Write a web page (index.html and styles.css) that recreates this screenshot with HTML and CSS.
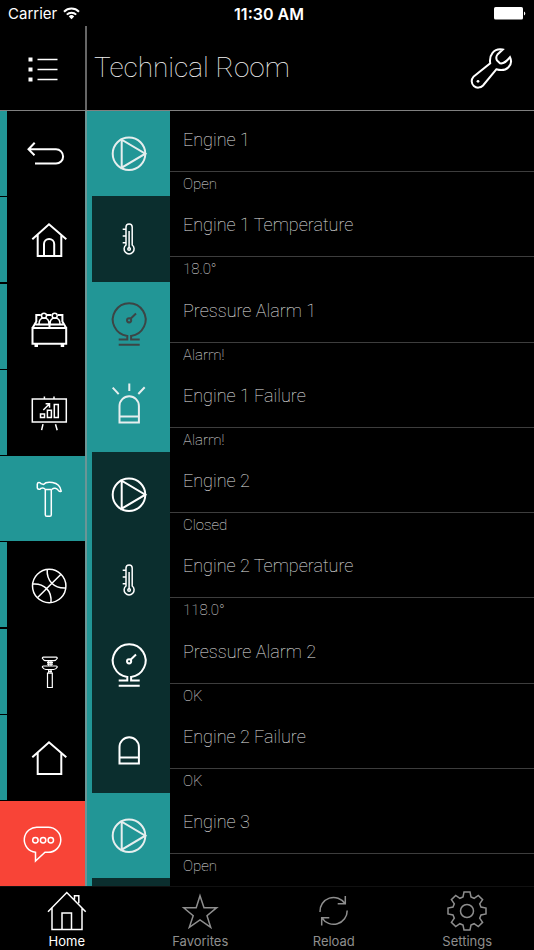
FILE: index.html
```html
<!DOCTYPE html>
<html lang="en">
<head>
<meta charset="utf-8">
<meta name="viewport" content="width=device-width, initial-scale=1">
<title>Technical Room</title>
<link rel="stylesheet" href="styles.css">
</head>
<body>
<svg class="sprite" aria-hidden="true">
  <symbol id="house" viewBox="0 0 48 49"><path d="M7.3 24.3 24 9.3l17.3 15M12.7 20v21h23.6V20"/></symbol>
  <symbol id="pump" viewBox="0 0 48 49"><circle cx="24" cy="24.7" r="16.3"/><path d="M16.7 10.7v28L40.3 24.7z"/></symbol>
  <symbol id="thermo" viewBox="0 0 48 49"><g stroke-width="1.5"><path d="M21 31V13a3.1 3.1 0 0 1 6.2 0v18a5 5 0 1 1-6.2 0zM24.1 17v17M17.7 15.3H21M17.7 22H21M17.7 28.7H21"/><circle cx="24.1" cy="35" r="1.3"/></g></symbol>
  <symbol id="gauge" viewBox="0 0 48 49"><path d="M13.7 39.5h8.6v-3.6a16.4 16.4 0 1 1 3.8 0v3.6h8.6M13.7 44.8h21M25.6 18.7l5.4-5.2"/><circle cx="24.1" cy="20.3" r="2.1"/></symbol>
  <symbol id="lamp" viewBox="0 0 48 49"><path d="M14.5 37.6V21a9.7 9.7 0 0 1 19.4 0v16.6zM14.5 31.4h19.4"/></symbol>
</svg>
<div class="app">
  <div class="status">
    <span class="carrier">Carrier
      <svg width="17" height="13" viewBox="0 0 17 13" aria-hidden="true"><g fill="none" stroke="#fff" stroke-width="2"><path d="M1 4.7a10.6 10.6 0 0 1 15 0M3.8 7.6a6.6 6.6 0 0 1 9.4 0"/></g><path d="M5.8 9.4a3.8 3.8 0 0 1 5.4 0L8.5 12.2z" fill="#fff"/></svg>
    </span>
    <time class="clock">11:30 AM</time>
    <span class="power"><svg width="32" height="13" viewBox="0 0 32 13" aria-hidden="true"><rect width="29" height="12.6" rx="1.6" fill="#fff"/><path d="M30 4.4a2.2 2.2 0 0 1 0 4z" fill="#fff"/></svg></span>
  </div>

  <header class="header">
    <button class="menu" type="button" aria-label="Menu">
      <svg class="icon" viewBox="0 0 48 49"><path d="M18.5 15.5h20M18.5 25.5h20M18.5 35.5h20" stroke-width="1.5"/><path d="M9.5 13.5h4v4h-4zM9.5 23.5h4v4h-4zM9.5 33.5h4v4h-4z" fill="#fff" stroke="none"/></svg>
    </button>
    <h1 class="title">Technical Room</h1>
    <button class="tools" type="button" aria-label="Tools">
      <svg class="icon" viewBox="0 0 48 49"><path d="M6.4 32.8 23.2 19.3C22 11.5 26.5 4 35.7 5.6L30.5 10.5C29 12.5 29.2 15 30 16.5L33 19.3C37 20 39.5 17.5 43 13.2C46.5 20.5 40 28.5 29.3 25.3L16 41.5A6.3 6.3 0 0 1 6.4 32.8z"/><circle cx="11" cy="37.3" r="1.4" fill="#fff" stroke="none"/></svg>
    </button>
  </header>

  <main class="main">
    <nav class="rooms" aria-label="Rooms">
      <a class="room" href="#back" aria-label="Back"><svg class="icon" viewBox="0 0 48 49"><path d="M9.7 13.7 3.500 20.3l6 6M3.500 20.3h27.500a7.1 7.1 0 0 1 0 14.2H10"/></svg></a>
      <a class="room" href="#entrance" aria-label="Entrance"><svg class="icon" viewBox="0 0 48 49"><path d="M7.3 24.3 24 9.3l17.3 15M12.7 20v21h23.6V20M19 41V29a5.1 5.1 0 0 1 10.2 0v12"/></svg></a>
      <a class="room" href="#bedroom" aria-label="Bedroom"><svg class="icon" viewBox="0 0 48 49"><path d="M7.5 26h33.7v15.7H7.5zM7.5 26l3.8-6.500V13h4.500M41.2 26l-3.8-6.500V13h-4.500M21.5 13h5M24.500 19.500V26M10.500 22.500h27.700"/><path stroke-width="1.5" d="M14 22c0-4 2-6 5-6s5 2 5 6M25 22c0-4 2-6 5-6s5 2 5 6"/><circle cx="19" cy="13.7" r="2.5" stroke-width="1.5"/><circle cx="29.7" cy="13.7" r="2.5" stroke-width="1.5"/><path d="M9.5 43.5h3.500M35.700 43.500h3.500" stroke-width="3"/></svg></a>
      <a class="room" href="#office" aria-label="Office"><svg class="icon" viewBox="0 0 48 49"><g stroke-width="1.5"><path d="M7.3 10.9h34v23h-34zM19.4 8.4v2.500M29 8.400v2.500M18 36.200l-1.400 6M30.500 36.200l1.700 6M15.500 26h4v3.600h-4zM22.400 22.300h4v7.300h-4zM29.300 16.600h4v13h-4zM18.300 22l6-6M20.600 15.700h3.900v4"/></g></svg></a>
      <a class="room selected" href="#technical" aria-label="Technical Room" aria-current="page"><svg class="icon" viewBox="0 0 48 49"><path stroke-width="1.5" d="M20.3 15.4v25.3q0 1.600 1.600 1.600h2.800q1.600 0 1.600-1.600V15.400M20.300 15.400c-1.200-1.500-2.900-1.700-4.400-1-.6 1.400-3.400 1.300-3.600-.6V10c.3-1.800 2.800-2 3.700-.3l2.500.7c2-2.300 6-2.300 9-1.800 5 .8 8 4.200 8.700 8.500-1 .8-2 .2-2.800-.7-2-2.500-4.700-2.800-6-1.300-2 .7-5 .3-7.100.3z"/></svg></a>
      <a class="room" href="#gym" aria-label="Gym"><svg class="icon" viewBox="0 0 48 49"><g stroke-width="1.5"><circle cx="24.2" cy="26" r="16.7"/><path d="M36 14.200 12.400 37.800M22.200 9.400C21.500 21 29 28.500 40.700 28M7.600 24C19 23 27 30.500 26 42.600"/></g></svg></a>
      <a class="room" href="#workshop" aria-label="Workshop"><svg class="icon" viewBox="0 0 48 49"><g stroke-width="1.2"><path d="M18.3 10.200h13q1 0 1 1-1.500 2.500-3.500 2.500h-8q-2 0-3.500-2.500 0-1 1-1zM18.300 19h13q1 0 1 1-1.500 2.500-3.500 2.500h-8q-2 0-3.500-2.500 0-1 1-1zM22.500 26.200h4.800v14.300h-4.800zM23.700 13.700V19M26 13.700V19M23.700 22.500v3.700M26 22.500v3.700M22 15.300h6M22 17.200h6M23 24.300h4"/></g></svg></a>
      <a class="room" href="#house" aria-label="House"><svg class="icon"><use href="#house"/></svg></a>
      <a class="room alert" href="#messages" aria-label="Messages"><svg class="icon" viewBox="0 0 48 49"><g stroke-width="1.5"><path d="M16.5 33.300v8.700l9.500-8.700h3.300a12.500 12.500 0 0 0 0-25H19.200a12.500 12.500 0 0 0-2.700 25z"/><circle cx="16.400" cy="21.300" r="2.700"/><circle cx="24.100" cy="21.300" r="2.700"/><circle cx="31.800" cy="21.300" r="2.700"/></g></svg></a>
    </nav>

    <ul class="devices">
      <li class="device on"><span class="tile"><svg class="icon"><use href="#pump"/></svg></span><div class="info"><h2 class="name">Engine 1</h2><p class="value">Open</p></div></li>
      <li class="device"><span class="tile"><svg class="icon"><use href="#thermo"/></svg></span><div class="info"><h2 class="name">Engine 1 Temperature</h2><p class="value">18.0°</p></div></li>
      <li class="device on muted"><span class="tile"><svg class="icon"><use href="#gauge"/></svg></span><div class="info"><h2 class="name">Pressure Alarm 1</h2><p class="value">Alarm!</p></div></li>
      <li class="device on"><span class="tile"><svg class="icon" viewBox="0 0 48 49"><path d="M14.5 37.600V21a9.700 9.700 0 0 1 19.400 0v16.600zM14.500 31.400h19.400M24.300-1.400V6M7.700 2.600l6 6.500M39.700 2.300l-6.400 6.700"/></svg></span><div class="info"><h2 class="name">Engine 1 Failure</h2><p class="value">Alarm!</p></div></li>
      <li class="device"><span class="tile"><svg class="icon"><use href="#pump"/></svg></span><div class="info"><h2 class="name">Engine 2</h2><p class="value">Closed</p></div></li>
      <li class="device"><span class="tile"><svg class="icon"><use href="#thermo"/></svg></span><div class="info"><h2 class="name">Engine 2 Temperature</h2><p class="value">118.0°</p></div></li>
      <li class="device"><span class="tile"><svg class="icon"><use href="#gauge"/></svg></span><div class="info"><h2 class="name">Pressure Alarm 2</h2><p class="value">OK</p></div></li>
      <li class="device"><span class="tile"><svg class="icon"><use href="#lamp"/></svg></span><div class="info"><h2 class="name">Engine 2 Failure</h2><p class="value">OK</p></div></li>
      <li class="device on"><span class="tile"><svg class="icon"><use href="#pump"/></svg></span><div class="info"><h2 class="name">Engine 3</h2><p class="value">Open</p></div></li>
      <li class="device"><span class="tile"></span></li>
    </ul>
  </main>

  <nav class="tabs" aria-label="Main">
    <a class="tab active" href="#home" aria-current="page"><svg class="tab-icon" viewBox="0 0 44 44"><path d="M3 22.700 21.800 3.500l18.900 19.200M7 19v21.600h30V19M17 40.600V24h9.500v16.600M29.500 10.500V6.700h4.300v7.500"/></svg>Home</a>
    <a class="tab" href="#favorites"><svg class="tab-icon" viewBox="0 0 44 44"><path d="M22 6.700l4 12h12.700l-9.700 8 3.700 11.600L22 31l-10.700 7.300L15.200 26.700l-9.500-8h12.500z"/></svg>Favorites</a>
    <a class="tab" href="#reload"><svg class="tab-icon" viewBox="0 0 44 44"><path d="M8 23a13.600 13.600 0 0 1 25-8.300M33.300 7v7.700h-7.600M35.200 21.500a13.600 13.600 0 0 1-25.200 7.300M9.700 36.500v-7.700h7.600"/></svg>Reload</a>
    <a class="tab" href="#settings"><svg class="tab-icon" viewBox="0 0 44 44"><path d="M18 8l1-5h6l1 5 3.100 1.300 4.200-2.900 4.300 4.300-2.900 4.200L36 18l5 1v6l-5 1-1.300 3.100 2.900 4.200-4.300 4.300-4.200-2.900L26 36l-1 5h-6l-1-5-3.100-1.300-4.200 2.900-4.300-4.300 2.900-4.200L8 26l-5-1v-6l5-1 1.300-3.100-2.900-4.200 4.300-4.300 4.200 2.900z"/><circle cx="22" cy="22" r="6.500"/></svg>Settings</a>
  </nav>
</div>
</body>
</html>
```
FILE: styles.css
```css
:root {
  --teal: #229696;
  --deep: #0b2e2e;
  --red: #f84437;
  --rule: #808080;
}

* { box-sizing: border-box; }

body {
  margin: 0;
  background: #000;
  color: #fff;
  font-family: Roboto, sans-serif;
}

h1, h2, p, ul { margin: 0; padding: 0; }

.sprite { display: none; }

.app {
  display: flex;
  flex-direction: column;
  height: 100vh;
}

.status {
  display: grid;
  grid-template-columns: 1fr auto 1fr;
  align-items: center;
  height: 26px;
  padding: 1px 8px 0;
  font: 15px/24px Inter, sans-serif;
}
.carrier { display: flex; align-items: center; gap: 6px; }
.clock { padding-left: 4px; font-size: 16px; font-weight: 600; }
.power { display: flex; justify-content: flex-end; }

.header {
  display: flex;
  align-items: stretch;
  height: 85px;
  border-bottom: 1px solid var(--rule);
}
.header button {
  display: flex;
  align-items: center;
  justify-content: center;
  padding: 0;
  border: 0;
  background: none;
}
.header .menu { width: 87px; border-right: 2px solid #666; }
.header .tools { padding-right: 19px; }
.title {
  flex: 1;
  padding-left: 7px;
  font-size: 28px;
  font-weight: 100;
  line-height: 84px;
  opacity: 0.95;
}

.icon {
  display: block;
  flex: none;
  width: 48px;
  height: 49px;
  overflow: visible;
  fill: none;
  stroke: #fff;
  stroke-width: 2;
}

.main {
  display: flex;
  flex: 1;
  min-height: 0;
  overflow: hidden;
}

.rooms {
  display: flex;
  flex: none;
  flex-direction: column;
  justify-content: space-between;
  width: 87px;
  border-right: 2px solid #6b9696;
}
.room {
  display: flex;
  align-items: center;
  justify-content: center;
  height: 85px;
  padding-left: 6px;
  border-left: 7px solid var(--teal);
}
.room.selected { background: var(--teal); }
.room.alert { padding-left: 0; border-left: 0; background: var(--red); }

.devices {
  display: grid;
  flex: 1;
  grid-auto-rows: 11%;
  list-style: none;
}
.device { display: flex; }
.tile {
  display: flex;
  align-items: center;
  justify-content: center;
  width: 83px;
  padding-right: 4px;
  border-left: 5px solid var(--teal);
  background: var(--deep);
}
.on .tile { background: var(--teal); }
.on .icon { stroke: #e6eeee; }
.muted .icon { stroke: #3c4545; }
.info { flex: 1; }
.name,
.value {
  padding: 0 13px;
  font-weight: 100;
  opacity: 0.9;
}
.name {
  padding-bottom: 2px;
  border-bottom: 1px solid #444;
  font-size: 18px;
  line-height: 58px;
}
.value {
  font-size: 15px;
  line-height: 24px;
}

.tabs {
  display: grid;
  grid-template-columns: repeat(4, 1fr);
  height: 64px;
  padding-top: 2px;
  border-top: 1px solid #111;
}
.tab {
  display: flex;
  flex-direction: column;
  align-items: center;
  color: #8e8e8e;
  font: 13px/16px Inter, sans-serif;
  text-decoration: none;
}
.tab.active { color: #fff; }
.tab-icon {
  width: 44px;
  height: 44px;
  fill: none;
  stroke: currentColor;
  stroke-width: 1.5;
}
```
